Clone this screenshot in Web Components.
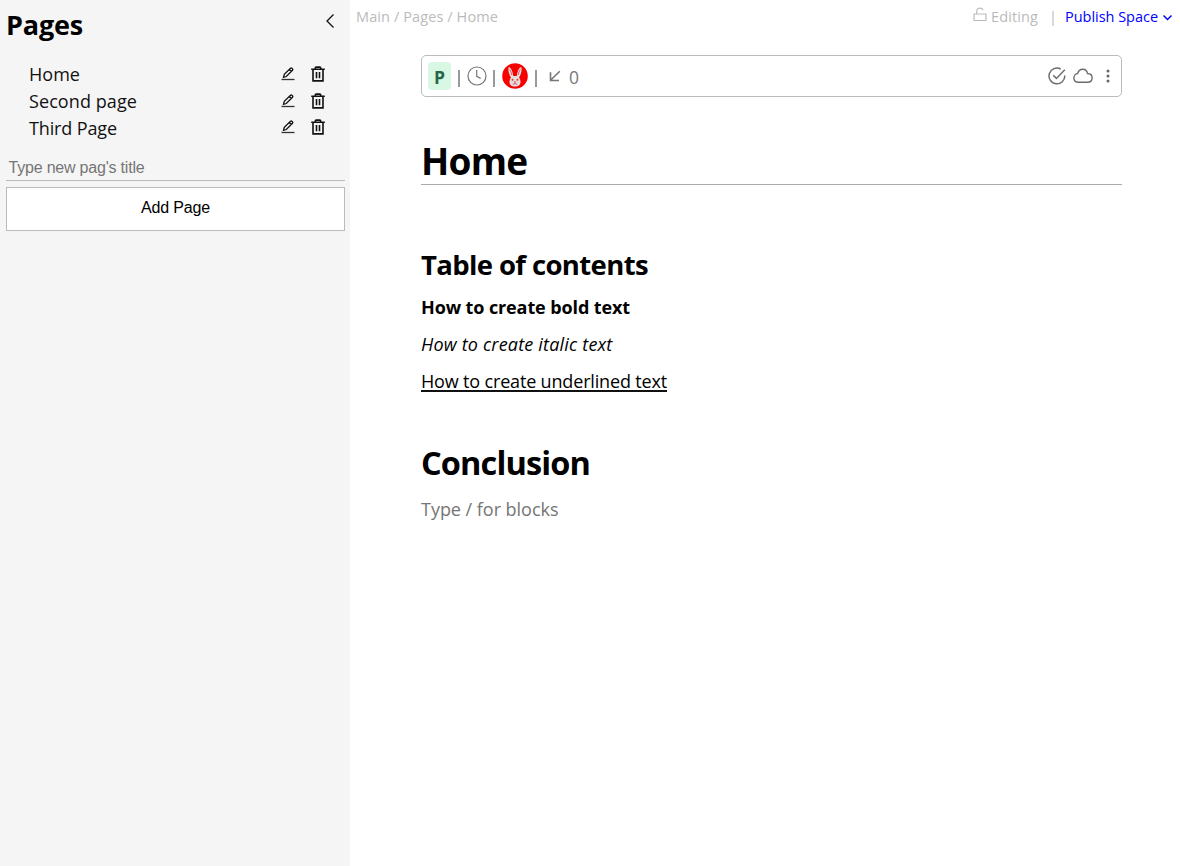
<!DOCTYPE html>
<html lang="en">
<head>
<meta charset="utf-8">
<title>Pages</title>
<style>
html,body{margin:0;height:100%;overflow:hidden;background:#fff}
body{font-family:"Open Sans","Noto Sans",sans-serif;color:#000}
</style>
</head>
<body>
<space-app></space-app>
<script>
const define=(name,html,setup)=>customElements.define(name,class extends HTMLElement{
  connectedCallback(){
    if(this.shadowRoot)return;
    this.attachShadow({mode:'open'}).innerHTML=html;
    if(setup)setup(this,this.shadowRoot);
  }
});

/* Text run whose tracking is tuned so that it spans the given width. */
define('fit-text','<style>:host{display:inline-block;white-space:nowrap;flex:none}span{display:inline-block}</style><span><slot></slot></span>',(el,root)=>{
  const w=+el.getAttribute('w'),s=root.querySelector('span');
  const n=el.textContent.length;
  s.style.letterSpacing=((w-s.getBoundingClientRect().width)/n)+'px';
  el.style.width=w+'px';
});

const icons={
  back:[10,16,'<path d="M8.5 1.500 2 8l6.500 6.500" stroke="#111" stroke-width="1.300"/>'],
  pen:[14,14,'<path d="M.5 12.500h13" stroke="#333" stroke-width="1.300"/><path d="M2.500 10.300 3.300 7.400 9.500 1.300q.7-.6 1.400 0l.6.6q.6.7 0 1.400L5.300 9.500zM8.300 2.500l2 2" stroke="#111" stroke-width="1.300"/>'],
  trash:[14,16,'<path d="M.2 3.300h13.600M4.300 3V2q0-.9.9-.9h3.600q.9 0 .9.900v1M2 3.500v11.400h10V3.500M5.500 6.100v6.200M8.500 6.100v6.200" stroke="#111" stroke-width="1.600"/>'],
  lock:[14,15,'<path d="M1 7h12v6.500H1zM3.700 7V4.200q0-3.100 3.300-3.100 2.500 0 3.100 2.100" stroke="#bbb" stroke-width="1.200" stroke-linejoin="round"/>'],
  down:[11,7,'<path d="m1.500 1.500 4 4 4-4" stroke="#00f" stroke-width="1.500"/>'],
  clock:[20,20,'<circle cx="10" cy="10" r="9" stroke="#777" stroke-width="1.200"/><path d="M9.700 4v6.400l4 2" stroke="#777" stroke-width="1.200"/>'],
  incoming:[12,12,'<path d="M10.800 1.200 1.500 10.300M1.500 2.300v8.200h8.500" stroke="#777" stroke-width="1.600"/>'],
  check:[18,18,'<path d="M12.700 2A7.900 7.900 0 1 0 16.800 8.500M5.200 8.200l3.200 3.200L16.800 2.800" stroke="#6d6d6d" stroke-width="1.500"/>'],
  cloud:[20,16,'<path d="M5.500 14.300C2.700 14.300.9 12.400.9 10S2.700 5.700 4.600 5.500C5.300 2.900 7.300 1.200 9.700 1.200c2.700 0 4.400 1.900 4.800 4.300 2.700.1 4.600 1.900 4.600 4.300 0 2.600-1.900 4.500-4.600 4.500z" stroke="#6d6d6d" stroke-width="1.400"/>'],
  dots:[4,14,'<g fill="#666"><circle cx="2" cy="2" r="1.500"/><circle cx="2" cy="7" r="1.500"/><circle cx="2" cy="12" r="1.500"/></g>'],
  rabbit:[26,26,'<circle cx="13" cy="13" r="12.800" fill="#f80000"/><g fill="#e5dede"><path d="M9 14.500C6.700 11 5.900 6.500 6.600 4.500c.8-1 2.400.6 3.400 3.300.7 1.900 1.100 3.600 1.200 5.200h3.600c.1-1.600.5-3.300 1.200-5.200 1-2.700 2.600-4.300 3.400-3.300.7 2-.1 6.500-2.400 10 1 1.300 1.500 2.800 1.500 4.500 0 3-2.400 4.600-5.500 4.600S7.500 22 7.500 19c0-1.700.5-3.200 1.500-4.500z"/></g><path d="M7.700 6.300q1.600 2.400 2 5.700M18.300 6.300q-1.600 2.400-2 5.700" stroke="#f33" stroke-width=".8"/><g fill="#d33"><circle cx="10.500" cy="16.700" r="1"/><circle cx="15.500" cy="16.700" r="1"/><path d="M11.700 18.600h2.600L13 20z"/></g><path d="M10.700 21q1.200.8 2.300-.7 1.100 1.500 2.300.7" stroke="#d33" stroke-width=".8"/>']
};
define('ui-icon','<style>:host{display:block;flex:none}svg{display:block}</style><div></div>',(el,root)=>{
  const [w,h,body]=icons[el.getAttribute('name')];
  root.querySelector('div').innerHTML=`<svg width="${w}" height="${h}" viewBox="0 0 ${w} ${h}" fill="none">${body}</svg>`;
});

define('page-row',`<style>
:host{display:flex;align-items:center;height:26.600px;padding:0 25px 0 29px;font-size:18px;line-height:26px;color:#111}
.grow{flex:1}ui-icon+ui-icon{margin-left:16px}::slotted(*){margin-top:1px}
</style><slot></slot><span class="grow"></span><ui-icon name="pen"></ui-icon><ui-icon name="trash"></ui-icon>`);

define('page-sidebar',`<style>
:host{display:block;background:#f5f5f5;box-sizing:border-box}
header{display:flex;justify-content:space-between;padding:5px 15px 0 6px;height:55.700px}
h1{margin:0;font-size:27px;line-height:40px;font-weight:700}
header ui-icon{margin-top:8px}
nav{height:90.300px}
form{padding:0 5px 0 6px;font:16px "Liberation Sans",Arial,sans-serif}
.field{height:25px;line-height:25px;padding-left:2.500px;border-bottom:1px solid #bbb;color:#757575;margin-bottom:6px;margin-top:4px}
.button{box-sizing:border-box;height:44px;border:1px solid #bbb;background:#fff;display:flex;justify-content:center;line-height:40px}
</style>
<header><h1><fit-text w="77">Pages</fit-text></h1><ui-icon name="back"></ui-icon></header>
<nav><page-row><fit-text w="51">Home</fit-text></page-row><page-row><fit-text w="108">Second page</fit-text></page-row><page-row><fit-text w="88">Third Page</fit-text></page-row></nav>
<form><div class="field"><fit-text w="136">Type new pag's title</fit-text></div><div class="button"><fit-text w="69">Add Page</fit-text></div></form>`);

define('top-bar',`<style>
:host{display:flex;align-items:center;height:33px;padding:0 7px 0 6px;font-size:14.500px;line-height:20px;color:#bbb}
.grow{flex:1}.lock{margin:-5px 4px 0 0}.sep{margin:0 10px 0 11px}.pub{color:#00f}.down{margin:2px 0 0 4px}
</style><fit-text w="142">Main / Pages / Home</fit-text><span class="grow"></span>
<ui-icon class="lock" name="lock"></ui-icon><fit-text w="47">Editing</fit-text><fit-text class="sep" w="6">|</fit-text><fit-text class="pub" w="93">Publish Space</fit-text><ui-icon class="down" name="down"></ui-icon>`);

define('doc-toolbar',`<style>
:host{display:flex;align-items:center;box-sizing:border-box;height:42px;border:1px solid #bbb;border-radius:5px;padding:0 11px 0 6px;color:#777;font-size:17.500px;line-height:26px}
.badge{width:23px;height:28px;border-radius:4px;background:#d8f8e4;color:#276749;font-weight:700;line-height:30px;text-align:center}
i{width:2px;height:17px;background:#999;margin-top:5px}
.grow{flex:1}
</style><div class="badge">P</div><i style="margin-left:7px"></i><ui-icon name="clock" style="margin-left:7px"></ui-icon><i style="margin-left:6px"></i><ui-icon name="rabbit" style="margin-left:7px"></ui-icon><i style="margin-left:7px"></i><ui-icon name="incoming" style="margin-left:12px"></ui-icon><fit-text w="11" style="margin:2px 0 0 8px">0</fit-text>
<span class="grow"></span><ui-icon name="check"></ui-icon><ui-icon name="cloud" style="margin-left:7px"></ui-icon><ui-icon name="dots" style="margin-left:13px"></ui-icon>`);

define('doc-page',`<style>
:host{display:block;padding:22px 58px 0 71px}
h1,h2,p{margin:0}
.title{font-size:37px;line-height:56px;padding-top:36px;height:51px;border-bottom:1px solid #aaa}
h2{font-size:27.500px;line-height:40px;margin-top:60px}
p{font-size:18px;line-height:26px}
.b{font-weight:700;margin-top:9px}.i{font-style:italic;margin-top:11px}.u{margin-top:11px}
.u fit-text{border-bottom:2px solid #111;line-height:17px;height:17px;vertical-align:top;margin-top:5px}
.c{font-size:32.500px;line-height:46px;margin-top:46px}.ph{color:#757575;margin-top:10px}
</style>
<doc-toolbar></doc-toolbar>
<h1 class="title"><fit-text w="106.500">Home</fit-text></h1>
<h2><fit-text w="227">Table of contents</fit-text></h2>
<p class="b"><fit-text w="209">How to create bold text</fit-text></p>
<p class="i"><fit-text w="191.500">How to create italic text</fit-text></p>
<p class="u"><fit-text w="246">How to create underlined text</fit-text></p>
<h1 class="c"><fit-text w="169">Conclusion</fit-text></h1>
<p class="ph"><fit-text w="137.500">Type / for blocks</fit-text></p>`);

define('space-app',`<style>
:host{display:grid;grid-template-columns:350px 1fr;height:100vh}
</style><page-sidebar></page-sidebar><main><top-bar></top-bar><doc-page></doc-page></main>`);
</script>
</body>
</html>
